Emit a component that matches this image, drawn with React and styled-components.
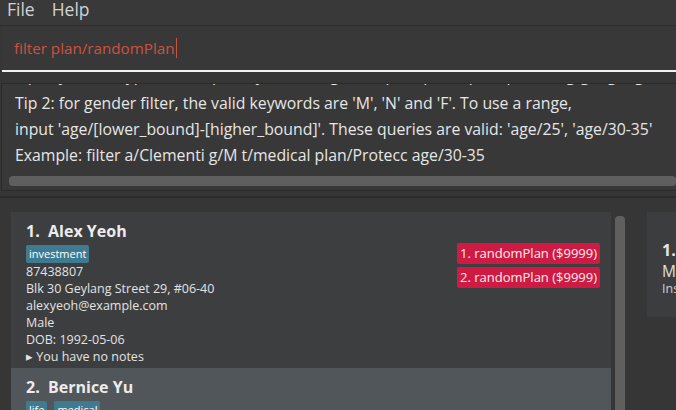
import React from 'react';
import styled, { createGlobalStyle } from 'styled-components';

const Global = createGlobalStyle`
  html, body {
    margin: 0;
    padding: 0;
    background: #363636;
    overflow: hidden;
  }
  body {
    font-family: "Open Sans", "Noto Sans", sans-serif;
  }
`;

const persons = [
  {
    name: 'Alex Yeoh',
    tags: ['investment'],
    phone: '87438807',
    address: 'Blk 30 Geylang Street 29, #06-40',
    email: 'alexyeoh@example.com',
    gender: 'Male',
    dob: '1992-05-06',
    plans: ['randomPlan ($9999)', 'randomPlan ($9999)'],
  },
  {
    name: 'Bernice Yu',
    tags: ['life', 'medical'],
    phone: '99272758',
    address: 'Blk 30 Lorong 3 Serangoon Gardens, #07-18',
    email: 'berniceyu@example.com',
    gender: 'Female',
    dob: '1995-01-01',
    plans: [],
  },
];

const Window = styled.div`
  width: 676px;
  height: 410px;
  display: flex;
  flex-direction: column;
  overflow: hidden;
  background: #363636;
`;

const MenuBar = styled.div`
  flex-shrink: 0;
  height: 25px;
  display: flex;
  gap: 17px;
  padding: 0 0 0 7px;
  align-items: flex-start;
  background: #393939;
  border-bottom: 1px solid #2c2c2c;
  color: #d2d2d2;
  font-size: 17.5px;
  line-height: 18px;
`;

const CommandBox = styled.div`
  flex-shrink: 0;
  height: 44px;
  margin-left: 2px;
  padding-left: 12px;
  display: flex;
  align-items: center;
  background: #383838;
  border-bottom: 2px solid #f2f2f2;
  color: #d0503f;
  font-size: 15.2px;
`;

const Caret = styled.span`
  display: inline-block;
  width: 1px;
  height: 20px;
  background: #d0503f;
  margin-left: 1px;
`;

const ResultBox = styled.div`
  flex-shrink: 0;
  margin: 11px 0 0 1px;
  padding-bottom: 4px;
  border: 1px solid #2a2a2a;
  border-right: none;
  background: #383838;
  display: flex;
  flex-direction: column;
  overflow: hidden;
`;

/* the line above "Tip 2" is scrolled out of view: only its descenders show */
const Peek = styled.div`
  height: 4px;
  margin-bottom: 2px;
  overflow: hidden;
  display: flex;
  flex-direction: column;
  justify-content: flex-end;
`;

const ResultLine = styled.div`
  flex-shrink: 0;
  padding-left: 13px;
  color: #e6e6e6;
  font-size: 15.8px;
  line-height: 26px;
  white-space: pre;
`;

const HScroll = styled.div`
  margin: 8px 0 0 7px;
  height: 10px;
  border-radius: 4px;
  background: #5f5f5f;
`;

const Divider = styled.div`
  flex-shrink: 0;
  margin-top: 5px;
  height: 2px;
  background: #2b2b2b;
`;

const Body = styled.div`
  flex: 1;
  display: flex;
  padding: 14px 0 0 11px;
  min-height: 0;
  overflow: hidden;
`;

const ListPanel = styled.div`
  flex-shrink: 0;
  width: 600px;
  display: flex;
  flex-direction: column;
  overflow: hidden;
`;

const Card = styled.div`
  flex-shrink: 0;
  background: ${(p) => (p.$alt ? '#505659' : '#3c3e40')};
  padding: 9px 10px 6px 15px;
  display: flex;
  justify-content: space-between;
  height: ${(p) => (p.$alt ? 'auto' : '156px')};
  box-sizing: border-box;
`;

const Info = styled.div`
  display: flex;
  flex-direction: column;
`;

const Name = styled.div`
  color: #ececec;
  font-weight: 700;
  font-size: 16px;
  line-height: 20px;
  white-space: pre;
`;

const Tags = styled.div`
  display: flex;
  gap: 7px;
  margin: 4px 0 0;
`;

const Tag = styled.span`
  background: #3e7b91;
  color: #ffffff;
  font-size: 11px;
  line-height: 18px;
  padding: 0 3px;
  border-radius: 2px;
`;

const Field = styled.div`
  color: #e3e3e3;
  font-size: 12.5px;
  line-height: 17px;
`;

const Plans = styled.div`
  display: flex;
  flex-direction: column;
  align-items: flex-start;
  gap: 3px;
  margin-top: 22px;
  width: 144px;
`;

const Plan = styled.span`
  background: #cf1a43;
  color: #fdeef0;
  font-size: 13px;
  line-height: 21px;
  padding: 0 3px;
  border-radius: 2px;
`;

const VScroll = styled.div`
  flex-shrink: 0;
  width: 10px;
  margin: 4px 0 0 4px;
  background: #5f5f5f;
  border-radius: 4px 4px 0 0;
`;

const DetailPanel = styled.div`
  flex-shrink: 0;
  margin-left: 22px;
  width: 60px;
  height: 105px;
  background: #3c3d3f;
  padding: 27px 0 0 15px;
  box-sizing: border-box;
  color: #e6e6e6;
  white-space: pre;
`;

const DetailTitle = styled.div`
  font-weight: 700;
  font-size: 16px;
  line-height: 22px;
`;

const DetailLine = styled.div`
  font-size: ${(p) => (p.$small ? '12.5px' : '15.5px')};
  line-height: ${(p) => (p.$small ? '16px' : '20px')};
  color: ${(p) => (p.$small ? '#cfcfcf' : '#e0e0e0')};
`;

const PersonCard = ({ index, person, alt }) => (
  <Card $alt={alt}>
    <Info>
      <Name>{`${index}.  ${person.name}`}</Name>
      <Tags>
        {person.tags.map((t) => (
          <Tag key={t}>{t}</Tag>
        ))}
      </Tags>
      <Field>{person.phone}</Field>
      <Field>{person.address}</Field>
      <Field>{person.email}</Field>
      <Field>{person.gender}</Field>
      <Field>DOB: {person.dob}</Field>
      <Field>▸ You have no notes</Field>
    </Info>
    {person.plans.length > 0 && (
      <Plans>
        {person.plans.map((p, i) => (
          <Plan key={i}>{`${i + 1}. ${p}`}</Plan>
        ))}
      </Plans>
    )}
  </Card>
);

export default function App() {
  return (
    <>
      <Global />
      <Window>
        <MenuBar>
          <span>File</span>
          <span>Help</span>
        </MenuBar>
        <CommandBox>
          filter plan/randomPlan
          <Caret />
        </CommandBox>
        <ResultBox>
          <Peek>
            <ResultLine>
              Tip 1: you can type in multiple keywords, e.g. filter plan/plan1 plan/plan2 tag/gang tags
            </ResultLine>
          </Peek>
          <ResultLine>Tip 2: for gender filter, the valid keywords are 'M', 'N' and 'F'. To use a range,</ResultLine>
          <ResultLine>input 'age/[lower_bound]-[higher_bound]'. These queries are valid: 'age/25', 'age/30-35'</ResultLine>
          <ResultLine>Example: filter a/Clementi g/M t/medical plan/Protecc age/30-35</ResultLine>
          <HScroll />
        </ResultBox>
        <Divider />
        <Body>
          <ListPanel>
            {persons.map((p, i) => (
              <PersonCard key={p.name} index={i + 1} person={p} alt={i % 2 === 1} />
            ))}
          </ListPanel>
          <VScroll />
          <DetailPanel>
            <DetailTitle>1.</DetailTitle>
            <DetailLine>Ma</DetailLine>
            <DetailLine $small>Insurance</DetailLine>
          </DetailPanel>
        </Body>
      </Window>
    </>
  );
}
